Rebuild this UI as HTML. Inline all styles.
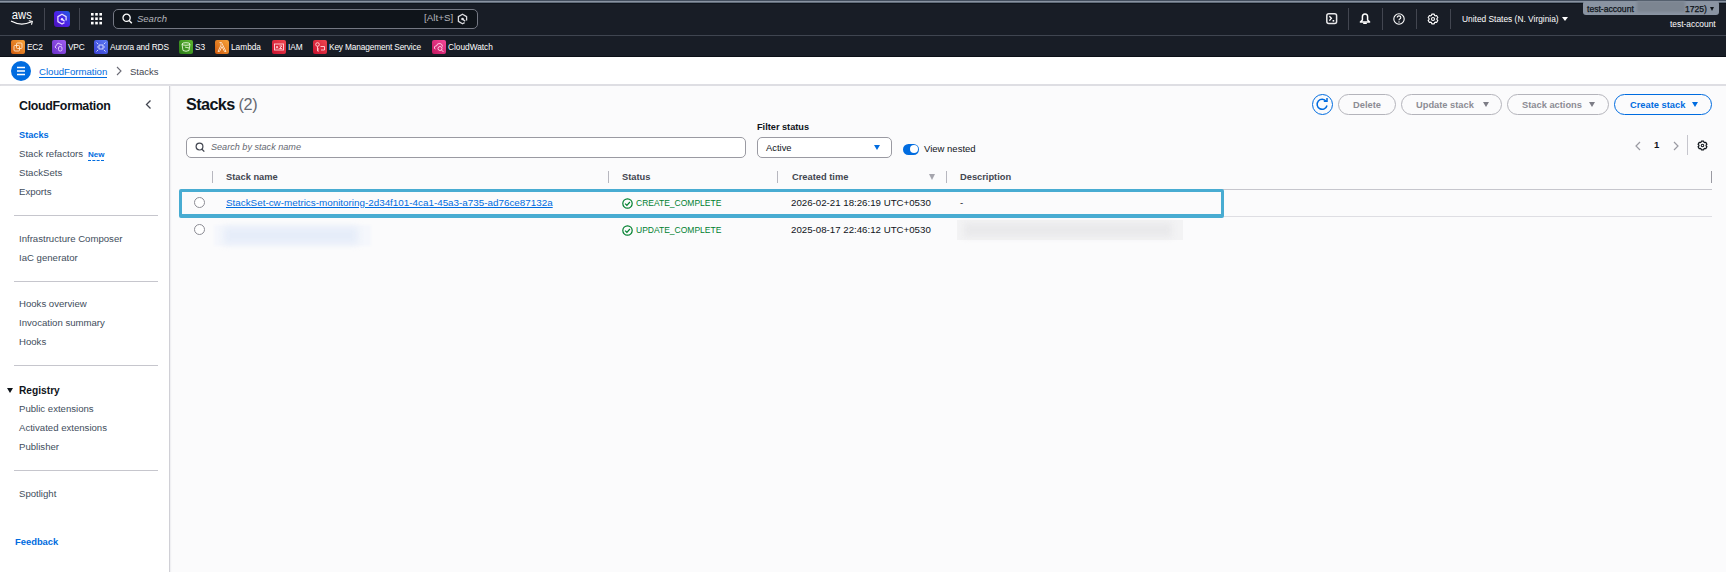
<!DOCTYPE html>
<html><head><meta charset="utf-8">
<style>
*{box-sizing:border-box;margin:0;padding:0}
html,body{width:1726px;height:572px;overflow:hidden;background:#fbfbfc;font-family:"Liberation Sans",sans-serif;color:#0f141a}
.a{position:absolute;white-space:nowrap}
#top{position:absolute;left:0;top:0;width:1726px;height:57px;background:#181d26;border-bottom:1px solid #0b0f16}
#strip{position:absolute;left:0;top:0;width:1726px;height:4px;background:linear-gradient(#434e5e 0,#434e5e 1px,#8993a1 1px,#8993a1 2px,#5f6a78 2px,#5f6a78 3px,#0e141c 3px)}
#sep1{position:absolute;left:0;top:35px;width:1726px;height:1px;background:#3f4550}
.vd{position:absolute;width:1px;background:#424650}
.fav{position:absolute;top:40px;height:14px;width:14px;border-radius:2px}
.favt{position:absolute;top:41px;font-size:8.3px;color:#fff;line-height:12px}
#side{position:absolute;left:0;top:86px;width:170px;height:486px;background:#fff;border-right:1px solid #d0d0d6;box-shadow:1px 0 1px #f0f0f3}
.nav{position:absolute;left:19px;font-size:9.6px;color:#414d5c;line-height:12px}
.hr{position:absolute;left:14px;width:144px;height:1px;background:#c6c6cd}
.btn{position:absolute;top:94px;height:21px;border:1px solid #b4b4bb;border-radius:11px;font-size:9.3px;font-weight:bold;color:#8c8c94;line-height:20px}
.tri{display:inline-block;width:0;height:0;border-left:3.6px solid transparent;border-right:3.6px solid transparent;border-top:5.3px solid #7d7d86}
.th{position:absolute;top:171px;font-size:9.3px;font-weight:bold;color:#424650;line-height:12px}
.cd{position:absolute;width:1px;background:#b7b7bf}
.td{position:absolute;font-size:9.6px;color:#0f141a;line-height:12px}
</style></head><body>
<div id="top"></div>
<div id="strip"></div>
<div id="sep1"></div>

<!-- header row 1 -->
<svg class="a" style="left:10px;top:9px" width="25" height="18" viewBox="0 0 25 18">
<text x="1.8" y="9.7" font-family="Liberation Sans" font-size="12" fill="#fff" textLength="20" lengthAdjust="spacingAndGlyphs">aws</text>
<path d="M1.5 12.3 Q11 17.5 21 13" stroke="#fff" stroke-width="1.3" fill="none" stroke-linecap="round"/>
<path d="M19.2 11.8 L22.3 12.4 L21.6 15.3" stroke="#fff" stroke-width="1.1" fill="none" stroke-linecap="round"/>
</svg>
<div class="vd" style="left:44px;top:8px;height:22px"></div>
<div class="a" style="left:54px;top:11px;width:16px;height:16px;border-radius:3px;background:linear-gradient(45deg,#4a12b0 0%,#4e1ee6 45%,#1f5fe0 100%)"></div>
<svg class="a" style="left:54px;top:11px" width="16" height="16" viewBox="0 0 16 16"><path d="M10.4 11.6 L8 13 L3.9 10.6 L3.9 5.6 L8 3.2 L12.1 5.6 L12.1 9.6" stroke="#e6dcff" stroke-width="1.3" fill="none" stroke-linejoin="round"/><circle cx="8" cy="8.2" r="1.2" fill="#f0eaff"/><path d="M8 8.2 L10.6 10.2" stroke="#f0eaff" stroke-width="1.2"/></svg>
<div class="vd" style="left:79px;top:8px;height:22px"></div>
<svg class="a" style="left:91px;top:13px" width="11" height="12" viewBox="0 0 11 12">
<g fill="#fff"><rect x="0" y="0" width="2.6" height="2.6"/><rect x="4.2" y="0" width="2.6" height="2.6"/><rect x="8.4" y="0" width="2.6" height="2.6"/>
<rect x="0" y="4.4" width="2.6" height="2.6"/><rect x="4.2" y="4.4" width="2.6" height="2.6"/><rect x="8.4" y="4.4" width="2.6" height="2.6"/>
<rect x="0" y="8.8" width="2.6" height="2.6"/><rect x="4.2" y="8.8" width="2.6" height="2.6"/><rect x="8.4" y="8.8" width="2.6" height="2.6"/></g></svg>
<div class="a" style="left:113px;top:9px;width:365px;height:20px;border:1px solid #747883;border-radius:5px;background:#0f141a"></div>
<svg class="a" style="left:122px;top:13px" width="11" height="12" viewBox="0 0 11 12"><circle cx="4.6" cy="4.8" r="3.6" stroke="#fff" stroke-width="1.3" fill="none"/><path d="M7.2 7.5 L9.8 10.3" stroke="#fff" stroke-width="1.4"/></svg>
<div class="a" style="left:137px;top:13px;font-size:9.5px;font-style:italic;color:#b4b4bb;line-height:12px">Search</div>
<div class="a" style="left:424px;top:12px;font-size:9.8px;color:#b4b4bb;line-height:12px">[Alt+S]</div>
<svg class="a" style="left:457px;top:13px" width="11" height="12" viewBox="0 0 11 12"><path d="M7.6 9.6 L5.5 10.8 L1.4 8.4 L1.4 3.6 L5.5 1.2 L9.6 3.6 L9.6 7.6" stroke="#dcdce0" stroke-width="1.3" fill="none" stroke-linejoin="round"/><circle cx="5.5" cy="6" r="1.3" fill="#e4e4e8"/><path d="M5.5 6 L8.2 8.2" stroke="#e4e4e8" stroke-width="1.3"/></svg>

<!-- right icons -->
<svg class="a" style="left:1326px;top:13px" width="12" height="12" viewBox="0 0 12 12"><rect x="0.8" y="0.8" width="9.8" height="9.8" rx="2" stroke="#e8e8ea" stroke-width="1.5" fill="none"/><path d="M3.4 3.3 L5.4 5.3 L3.4 7.6" stroke="#fff" stroke-width="1.3" fill="none"/><rect x="6.6" y="7" width="1.6" height="1.6" fill="#fff"/></svg>
<div class="vd" style="left:1348px;top:8px;height:22px"></div>
<svg class="a" style="left:1359px;top:13px" width="12" height="12" viewBox="0 0 12 12"><path d="M6 1 C4.2 1 3.4 2.2 3.4 3.8 L3.4 7 L1.4 9 L10.6 9 L8.6 7 L8.6 3.8 C8.6 2.2 7.8 1 6 1 Z" stroke="#fff" stroke-width="1.5" fill="none" stroke-linejoin="round"/><path d="M4.8 10.2 L7.2 10.2" stroke="#fff" stroke-width="1.6" stroke-linecap="round"/></svg>
<div class="vd" style="left:1382px;top:8px;height:22px"></div>
<svg class="a" style="left:1393px;top:13px" width="12" height="12" viewBox="0 0 12 12"><circle cx="6" cy="6" r="5.2" stroke="#fff" stroke-width="1.1" fill="none"/><path d="M4.2 4.6 Q4.2 2.9 6 2.9 Q7.8 2.9 7.8 4.5 Q7.8 5.5 6.7 6 Q6 6.3 6 7.3" stroke="#fff" stroke-width="1.1" fill="none"/><circle cx="6" cy="9" r="0.7" fill="#fff"/></svg>
<div class="vd" style="left:1416px;top:9px;height:20px"></div>
<svg class="a" style="left:1427px;top:13px" width="12" height="12" viewBox="0 0 12 12"><path d="M4.41 2.44 L4.79 1.15 L7.21 1.15 L7.59 2.44 L8.29 2.84 L9.60 2.53 L10.81 4.62 L9.88 5.59 L9.88 6.41 L10.81 7.38 L9.60 9.47 L8.29 9.16 L7.59 9.56 L7.21 10.85 L4.79 10.85 L4.41 9.56 L3.71 9.16 L2.40 9.47 L1.19 7.38 L2.12 6.41 L2.12 5.59 L1.19 4.62 L2.40 2.53 L3.71 2.84 Z" stroke="#fff" stroke-width="1.1" fill="none" stroke-linejoin="round"/><circle cx="6" cy="6" r="1.5" stroke="#fff" stroke-width="1.1" fill="none"/></svg>
<div class="vd" style="left:1450px;top:9px;height:20px"></div>
<div class="a" style="left:1462px;top:14px;font-size:8.4px;color:#fff;line-height:10px">United States (N. Virginia)</div>
<div class="a" style="left:1562px;top:17px;width:0;height:0;border-left:3px solid transparent;border-right:3px solid transparent;border-top:4.6px solid #fff"></div>
<div class="a" style="left:1583px;top:1px;width:136px;height:14px;background:#8a94a2;border-radius:3px"></div>
<div class="a" style="left:1587px;top:4px;font-size:8.6px;color:#0f141a;line-height:10px;-webkit-text-stroke:0.25px #0f141a">test-account</div>
<div class="a" style="left:1637px;top:1px;width:48px;height:11px;background:#7c8591;filter:blur(0.8px)"></div>
<div class="a" style="left:1685px;top:4px;font-size:8.6px;color:#0f141a;line-height:10px;-webkit-text-stroke:0.25px #0f141a">1725)</div>
<div class="a" style="left:1710px;top:6px;width:0;height:0;border-left:2.5px solid transparent;border-right:2.5px solid transparent;border-top:4.5px solid #0f141a;top:7px"></div>
<div class="a" style="left:1670px;top:19px;font-size:8.4px;color:#fff;line-height:10px">test-account</div>

<!-- favorites -->
<div class="fav" style="left:11px;background:linear-gradient(45deg,#d05a0e,#f7a43a)"></div>
<svg class="a" style="left:11px;top:40px" width="14" height="14" viewBox="0 0 14 14" fill="none" stroke="#fde3c8" stroke-width="0.9"><rect x="5.5" y="3" width="5.5" height="5.5" rx="1"/><rect x="3" y="5.5" width="5.5" height="5.5" rx="1"/></svg>
<div class="favt" style="left:27px;letter-spacing:-0.2px">EC2</div>
<div class="fav" style="left:52px;background:linear-gradient(45deg,#6a2fc8,#a05ef0)"></div>
<svg class="a" style="left:52px;top:40px" width="14" height="14" viewBox="0 0 14 14" fill="none" stroke="#e6d6ff" stroke-width="0.9"><path d="M4.5 8.5 L3 7 L6 3 L10 5"/><rect x="6.5" y="6.5" width="3.5" height="4.5" rx="1.5"/></svg>
<div class="favt" style="left:68px;letter-spacing:-0.2px">VPC</div>
<div class="fav" style="left:94px;background:linear-gradient(45deg,#3a3fd0,#5b7af5)"></div>
<svg class="a" style="left:94px;top:40px" width="14" height="14" viewBox="0 0 14 14" fill="none" stroke="#dfe4ff" stroke-width="0.9"><rect x="5" y="5" width="4" height="4"/><path d="M2.5 2.5 L4 4 M11.5 2.5 L10 4 M2.5 11.5 L4 10 M11.5 11.5 L10 10 M3 7 L4.5 7 M9.5 7 L11 7"/></svg>
<div class="favt" style="left:110px;letter-spacing:-0.15px">Aurora and RDS</div>
<div class="fav" style="left:179px;background:linear-gradient(45deg,#2a7a18,#5cb82e)"></div>
<svg class="a" style="left:179px;top:40px" width="14" height="14" viewBox="0 0 14 14" fill="none" stroke="#e4f5d8" stroke-width="0.9"><ellipse cx="7" cy="4" rx="4" ry="1.3"/><path d="M3 4 L4 10.5 Q7 12 10 10.5 L11 4"/><path d="M6 7 L10 8"/></svg>
<div class="favt" style="left:195px">S3</div>
<div class="fav" style="left:215px;background:linear-gradient(45deg,#d05a0e,#f7a43a)"></div>
<svg class="a" style="left:215px;top:40px" width="14" height="14" viewBox="0 0 14 14" fill="none" stroke="#fde3c8" stroke-width="0.9"><path d="M4.5 2.5 L6.5 2.5 L11 11.5 L9.5 11.5 L7 6.5 L4.5 11.5 L3 11.5 L6.2 4.8 L5.5 3.5"/></svg>
<div class="favt" style="left:231px">Lambda</div>
<div class="fav" style="left:272px;background:linear-gradient(45deg,#c8102e,#f0464f)"></div>
<svg class="a" style="left:272px;top:40px" width="14" height="14" viewBox="0 0 14 14" fill="none" stroke="#ffd6d9" stroke-width="0.9"><rect x="2.5" y="4" width="9" height="6"/><path d="M4 8.5 L5 6 L6 8.5 M7.5 6 L10 6 L7.5 8.5 L10 8.5"/></svg>
<div class="favt" style="left:288px">IAM</div>
<div class="fav" style="left:313px;background:linear-gradient(45deg,#c8102e,#f0464f)"></div>
<svg class="a" style="left:313px;top:40px" width="14" height="14" viewBox="0 0 14 14" fill="none" stroke="#ffd6d9" stroke-width="0.9"><circle cx="4.5" cy="4.5" r="1.8"/><path d="M4.5 6.3 L4.5 11 L6 11 M4.5 9 L6 9"/><path d="M7.5 6.5 L11.5 6.5 L11.5 10 L8 10"/></svg>
<div class="favt" style="left:329px;letter-spacing:-0.14px">Key Management Service</div>
<div class="fav" style="left:432px;background:linear-gradient(45deg,#c4175f,#f5489a)"></div>
<svg class="a" style="left:432px;top:40px" width="14" height="14" viewBox="0 0 14 14" fill="none" stroke="#ffd6ea" stroke-width="0.9"><path d="M3.5 9 Q2 9 2.5 7 Q3 5.5 4.5 6 Q5 3 8 3.5 Q10.5 4 10.5 6.5"/><circle cx="8" cy="8.5" r="2"/><path d="M9.5 10 L11.5 12"/></svg>
<div class="favt" style="left:448px">CloudWatch</div>

<!-- breadcrumb bar -->
<div class="a" style="left:0;top:57px;width:1726px;height:29px;background:#fff;border-bottom:2px solid #dedee3"></div>
<div class="a" style="left:11px;top:61px;width:20px;height:20px;border-radius:50%;background:#006ce0"></div>
<svg class="a" style="left:11px;top:61px" width="20" height="20" viewBox="0 0 20 20"><path d="M6 6.6 H14 M6 10 H14 M6 13.4 H14" stroke="#fff" stroke-width="1.5"/></svg>
<div class="a" style="left:39px;top:66px;font-size:9.6px;color:#006ce0;line-height:11px;border-bottom:1px solid #006ce0">CloudFormation</div>
<svg class="a" style="left:115px;top:66px" width="8" height="10" viewBox="0 0 8 10"><path d="M2 1 L6 5 L2 9" stroke="#6b6b75" stroke-width="1.1" fill="none"/></svg>
<div class="a" style="left:130px;top:66px;font-size:9.5px;color:#424650;line-height:11px">Stacks</div>

<!-- sidebar -->
<div id="side"></div>
<div class="a" style="left:19px;top:99px;font-size:12.4px;font-weight:bold;color:#0f141a;line-height:14px;letter-spacing:-0.3px">CloudFormation</div>
<svg class="a" style="left:144px;top:99px" width="9" height="11" viewBox="0 0 9 11"><path d="M6.5 1.5 L2.5 5.5 L6.5 9.5" stroke="#424650" stroke-width="1.3" fill="none"/></svg>
<div class="nav" style="left:19px;top:129px;font-weight:bold;color:#006ce0;font-size:9.2px">Stacks</div>
<div class="nav" style="top:148px">Stack refactors</div>
<div class="a" style="left:88px;top:150px;font-size:8px;font-weight:bold;color:#006ce0;line-height:9px;padding-bottom:1px;border-bottom:1px dashed #006ce0">New</div>
<div class="nav" style="top:167px">StackSets</div>
<div class="nav" style="top:186px">Exports</div>
<div class="hr" style="top:215px"></div>
<div class="nav" style="top:233px">Infrastructure Composer</div>
<div class="nav" style="top:252px">IaC generator</div>
<div class="hr" style="top:281px"></div>
<div class="nav" style="top:298px">Hooks overview</div>
<div class="nav" style="top:317px">Invocation summary</div>
<div class="nav" style="top:336px">Hooks</div>
<div class="hr" style="top:365px"></div>
<div class="a" style="left:7px;top:388px;width:0;height:0;border-left:3.3px solid transparent;border-right:3.3px solid transparent;border-top:5.5px solid #0f141a"></div>
<div class="nav" style="top:385px;font-weight:bold;color:#0f141a;font-size:10.2px">Registry</div>
<div class="nav" style="top:403px">Public extensions</div>
<div class="nav" style="top:422px">Activated extensions</div>
<div class="nav" style="top:441px">Publisher</div>
<div class="hr" style="top:470px"></div>
<div class="nav" style="top:488px">Spotlight</div>
<div class="nav" style="left:15px;top:536px;font-weight:bold;color:#006ce0;font-size:9.4px">Feedback</div>

<!-- main -->
<div class="a" style="left:186px;top:95px;font-size:16.2px;font-weight:bold;color:#0f141a;line-height:18px;letter-spacing:-0.6px">Stacks <span style="font-weight:normal;color:#656871;letter-spacing:-0.3px">(2)</span></div>

<!-- buttons -->
<div class="a" style="left:1312px;top:94px;width:21px;height:21px;border:1.2px solid #006ce0;border-radius:50%"></div>
<svg class="a" style="left:1312px;top:94px" width="21" height="21" viewBox="0 0 21 21"><path d="M14.2 7.4 A5 5 0 1 0 15 11.5" stroke="#006ce0" stroke-width="1.5" fill="none"/><path d="M11.8 7.2 L15 7.2 L15 4" stroke="#006ce0" stroke-width="1.5" fill="none"/></svg>
<div class="btn" style="left:1338px;width:58px;padding-left:14px">Delete</div>
<div class="btn" style="left:1401px;width:101px;padding-left:14px">Update stack<span class="tri" style="position:absolute;left:81px;top:7px"></span></div>
<div class="btn" style="left:1507px;width:102px;padding-left:14px">Stack actions<span class="tri" style="position:absolute;left:81px;top:7px"></span></div>
<div class="btn" style="left:1614px;width:98px;padding-left:15px;border-color:#006ce0;color:#006ce0">Create stack<span class="tri" style="position:absolute;left:77px;top:7px;border-top-color:#006ce0"></span></div>

<!-- filter -->
<div class="a" style="left:186px;top:137px;width:560px;height:21px;border:1px solid #9a9aa2;border-radius:5px;background:#fff"></div>
<svg class="a" style="left:195px;top:142px" width="11" height="12" viewBox="0 0 11 12"><circle cx="4.5" cy="4.6" r="3.4" stroke="#424650" stroke-width="1.2" fill="none"/><path d="M7 7.2 L9.3 9.6" stroke="#424650" stroke-width="1.3"/></svg>
<div class="a" style="left:211px;top:142px;font-size:9.1px;font-style:italic;color:#656871;line-height:11px">Search by stack name</div>
<div class="a" style="left:757px;top:122px;font-size:9.2px;font-weight:bold;color:#0f141a;line-height:10px">Filter status</div>
<div class="a" style="left:757px;top:137px;width:135px;height:21px;border:1px solid #9a9aa2;border-radius:5px;background:#fff"></div>
<div class="a" style="left:766px;top:142px;font-size:9.4px;color:#0f141a;line-height:11px">Active</div>
<div class="a" style="left:874px;top:145px;width:0;height:0;border-left:3.6px solid transparent;border-right:3.6px solid transparent;border-top:5.8px solid #006ce0"></div>
<div class="a" style="left:902.5px;top:144px;width:16.5px;height:11px;border-radius:5.5px;background:#006ce0"></div>
<div class="a" style="left:910px;top:145.3px;width:8.2px;height:8.2px;border-radius:50%;background:#fff"></div>
<div class="a" style="left:924px;top:143px;font-size:9.5px;color:#0f141a;line-height:11px">View nested</div>

<!-- pagination -->
<svg class="a" style="left:1634px;top:141px" width="8" height="10" viewBox="0 0 8 10"><path d="M6 1 L2 5 L6 9" stroke="#9a9aa2" stroke-width="1.2" fill="none"/></svg>
<div class="a" style="left:1654px;top:139px;font-size:9.5px;font-weight:bold;color:#0f141a;line-height:11px">1</div>
<svg class="a" style="left:1672px;top:141px" width="8" height="10" viewBox="0 0 8 10"><path d="M2 1 L6 5 L2 9" stroke="#9a9aa2" stroke-width="1.2" fill="none"/></svg>
<div class="cd" style="left:1687px;top:135px;height:20px;background:#c6c6cd"></div>
<svg class="a" style="left:1697px;top:140px" width="11" height="11" viewBox="0 0 12 12"><path d="M4.41 2.44 L4.79 1.15 L7.21 1.15 L7.59 2.44 L8.29 2.84 L9.60 2.53 L10.81 4.62 L9.88 5.59 L9.88 6.41 L10.81 7.38 L9.60 9.47 L8.29 9.16 L7.59 9.56 L7.21 10.85 L4.79 10.85 L4.41 9.56 L3.71 9.16 L2.40 9.47 L1.19 7.38 L2.12 6.41 L2.12 5.59 L1.19 4.62 L2.40 2.53 L3.71 2.84 Z" stroke="#0f141a" stroke-width="1.3" fill="none" stroke-linejoin="round"/><circle cx="6" cy="6" r="1.4" stroke="#0f141a" stroke-width="1.1" fill="none"/></svg>

<!-- table header -->
<div class="cd" style="left:212px;top:171px;height:12px"></div>
<div class="th" style="left:226px">Stack name</div>
<div class="cd" style="left:608px;top:171px;height:12px"></div>
<div class="th" style="left:622px">Status</div>
<div class="cd" style="left:777px;top:171px;height:12px"></div>
<div class="th" style="left:792px">Created time</div>
<div class="a" style="left:929px;top:174px;width:0;height:0;border-left:3.8px solid transparent;border-right:3.8px solid transparent;border-top:6px solid #a5a5ad"></div>
<div class="cd" style="left:946px;top:171px;height:12px"></div>
<div class="th" style="left:960px">Description</div>
<div class="cd" style="left:1711px;top:171px;height:12px;width:1px;background:#9a9aa2"></div>

<div class="a" style="left:186px;top:189px;width:1526px;height:1px;background:#c6c6cd"></div>
<div class="a" style="left:186px;top:216px;width:1526px;height:1px;background:#dedee3"></div>

<!-- row 1 -->
<div class="a" style="left:194px;top:197px;width:11px;height:11px;border:1px solid #8c8c94;border-radius:50%;background:#fff"></div>
<div class="td" style="left:226px;top:197px;color:#006ce0;font-size:9.85px;text-decoration:underline">StackSet-cw-metrics-monitoring-2d34f101-4ca1-45a3-a735-ad76ce87132a</div>
<svg class="a" style="left:622px;top:198px" width="11" height="11" viewBox="0 0 11 11"><circle cx="5.5" cy="5.5" r="4.7" stroke="#00802f" stroke-width="1.2" fill="none"/><path d="M3.1 5.6 L4.9 7.3 L7.9 4" stroke="#00802f" stroke-width="1.2" fill="none"/></svg>
<div class="td" style="left:636px;top:197px;color:#00802f;font-size:8.5px">CREATE_COMPLETE</div>
<div class="td" style="left:791px;top:197px;font-size:9.7px">2026-02-21 18:26:19 UTC+0530</div>
<div class="td" style="left:960px;top:197px">-</div>

<!-- row 2 -->
<div class="a" style="left:194px;top:224px;width:11px;height:11px;border:1px solid #8c8c94;border-radius:50%;background:#fff"></div>
<div class="a" style="left:214px;top:225px;width:157px;height:21px;background:#f5f7fc;filter:blur(0.8px)"></div>
<div class="a" style="left:224px;top:227px;width:134px;height:17px;background:#e6edf9;filter:blur(3.5px)"></div>
<svg class="a" style="left:622px;top:225px" width="11" height="11" viewBox="0 0 11 11"><circle cx="5.5" cy="5.5" r="4.7" stroke="#00802f" stroke-width="1.2" fill="none"/><path d="M3.1 5.6 L4.9 7.3 L7.9 4" stroke="#00802f" stroke-width="1.2" fill="none"/></svg>
<div class="td" style="left:636px;top:224px;color:#00802f;font-size:8.5px">UPDATE_COMPLETE</div>
<div class="td" style="left:791px;top:224px;font-size:9.7px">2025-08-17 22:46:12 UTC+0530</div>
<div class="a" style="left:957px;top:220px;width:226px;height:20px;background:#f3f3f4;filter:blur(0.6px)"></div>
<div class="a" style="left:964px;top:223px;width:208px;height:14px;background:#e9e9eb;filter:blur(3px)"></div>

<!-- highlight -->
<div class="a" style="left:179px;top:189px;width:1045px;height:29px;border:3.8px solid #48acd2;border-bottom-width:4.2px;border-radius:2px"></div>
</body></html>
